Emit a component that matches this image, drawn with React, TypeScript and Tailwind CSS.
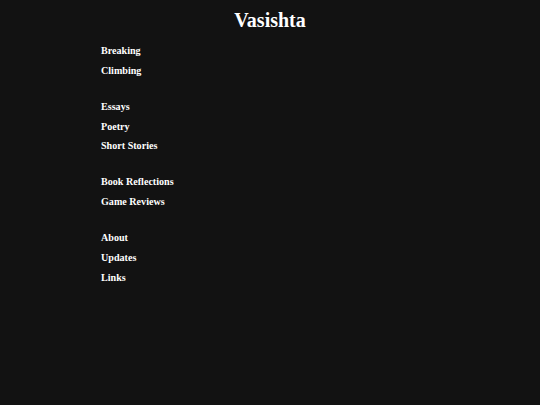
export default function App() {
  const groups = [
    ["Breaking", "Climbing"],
    ["Essays", "Poetry", "Short Stories"],
    ["Book Reflections", "Game Reviews"],
    ["About", "Updates", "Links"],
  ];
  return (
    <div
      className="min-h-[405px] w-full bg-[#121212] text-white"
      style={{ fontFamily: '"Liberation Serif", "Times New Roman", serif' }}
    >
      <h1 className="pt-[6px] text-center text-[20px] font-bold leading-[28px]">Vasishta</h1>
      <nav className="mt-[7px] flex flex-col gap-[16.25px] pl-[101px]">
        {groups.map((g, i) => (
          <ul key={i} className="flex flex-col">
            {g.map((item) => (
              <li key={item} className="text-[10.1px] font-bold leading-[19.75px]">
                <a href="#">{item}</a>
              </li>
            ))}
          </ul>
        ))}
      </nav>
    </div>
  );
}
